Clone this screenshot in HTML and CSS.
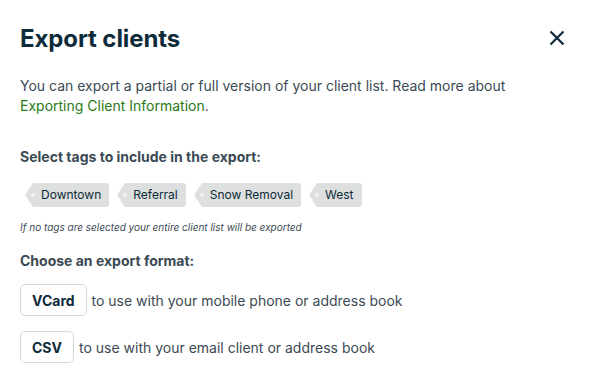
FILE: index.html
```html
<!DOCTYPE html>
<html>
<head>
<meta charset="utf-8">
<link rel="stylesheet" href="styles.css">
</head>
<body>
<div class="dialog">
  <header class="head">
    <h1 class="title">Export clients</h1>
    <button class="close" aria-label="Close">
      <svg width="16" height="16" viewBox="0 0 16 16"><path d="M1.5 1.5L14.5 14.5M14.5 1.5L1.5 14.5" stroke="#0d2b3a" stroke-width="2.2" fill="none"/></svg>
    </button>
  </header>
  <p class="intro">You can export a partial or full version of your client list. Read more about <a class="link" href="#">Exporting Client Information</a>.</p>
  <h2 class="label">Select tags to include in the export:</h2>
  <div class="tags">
    <span class="tag">Downtown</span>
    <span class="tag">Referral</span>
    <span class="tag">Snow Removal</span>
    <span class="tag">West</span>
  </div>
  <p class="hint">If no tags are selected your entire client list will be exported</p>
  <h2 class="label label-format">Choose an export format:</h2>
  <div class="format"><button class="btn">VCard</button><span>to use with your mobile phone or address book</span></div>
  <div class="format"><button class="btn">CSV</button><span>to use with your email client or address book</span></div>
</div>
</body>
</html>
```
FILE: styles.css
```css
* { box-sizing: border-box; }
body {
  margin: 0;
  background: #fff;
  font-family: Inter, "Noto Sans", sans-serif;
  color: #3b4a54;
}
.dialog { padding: 24px 20px 0 20px; }
.head {
  display: flex;
  justify-content: space-between;
  align-items: center;
  height: 28px;
}
.title {
  margin: 0;
  font-size: 24px;
  font-weight: 700;
  color: #0d2b3a;
  letter-spacing: -0.1px;
}
.close {
  border: 0;
  background: none;
  padding: 0;
  margin-right: 6px;
  width: 16px;
  height: 16px;
  display: flex;
}
.intro {
  margin: 24px 0 0 0;
  font-size: 14px;
  line-height: 20px;
}
.link { color: #2a7a16; text-decoration: none; }
.label {
  margin: 32px 0 0 0;
  font-size: 14px;
  font-weight: 700;
  color: #3b4a54;
  line-height: 18px;
}
.tags {
  display: flex;
  gap: 8px;
  margin-top: 17px;
  padding-left: 5px;
}
.tag {
  position: relative;
  height: 24px;
  line-height: 24px;
  font-size: 12px;
  color: #0d2b3a;
  background: #dedfdf;
  padding: 0 8px 0 8px;
  margin-left: 8px;
  border-radius: 0 3px 3px 0;
}
.tag::before {
  content: "";
  position: absolute;
  left: -8px;
  top: 0;
  border-style: solid;
  border-width: 12px 8px 12px 0;
  border-color: transparent #dedfdf transparent transparent;
}
.tag::after {
  content: "";
  position: absolute;
  left: -2px;
  top: 10px;
  width: 4px;
  height: 4px;
  border-radius: 50%;
  background: #f4f4f4;
}
.hint {
  margin: 14px 0 0 0;
  font-size: 10px;
  font-style: italic;
  color: #3b4a54;
}
.label-format { margin-top: 19px; }
.format {
  display: flex;
  align-items: center;
  gap: 5px;
  font-size: 14px;
  margin-top: 14px;
}
.format + .format { margin-top: 15px; }
.btn {
  font-family: Inter, "Noto Sans", sans-serif;
  font-weight: 700;
  font-size: 14px;
  color: #0d2b3a;
  background: #fff;
  border: 1px solid #d5dadd;
  border-radius: 5px;
  height: 32px;
  padding: 0 11px;
}
```
